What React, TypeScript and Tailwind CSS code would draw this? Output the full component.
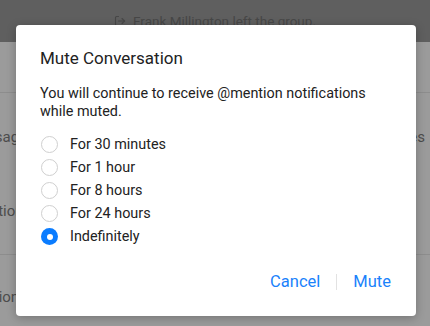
import { useState } from 'react';
import { LogOut } from 'lucide-react';

const options = ['For 30 minutes', 'For 1 hour', 'For 8 hours', 'For 24 hours', 'Indefinitely'];

const App = () => {
  const [selected, setSelected] = useState('Indefinitely');

  return (
    <div className="relative w-[430px] h-[326px] overflow-hidden bg-[#9b9b9b] font-['Roboto',sans-serif]">
      {/* page behind the overlay */}
      <div className="h-[42px] bg-[#5f5f5f] flex items-center justify-center gap-[7px] text-[13.5px] text-[#474747]">
        <LogOut size={12} strokeWidth={2.2} />
        <span>Frank Millington left the group.</span>
      </div>
      <div className="h-[51px] border-b border-[#8d8d8d]" />
      <div className="h-[162px] pt-[24px] border-b border-[#8d8d8d] text-[15px] leading-[22px] text-[#4d4d4d]">
        <div className="flex justify-between items-center h-[40px]">
          <span className="ml-[-34px]">Messages</span>
          <span className="mr-[5px]">Files</span>
        </div>
        <div className="mt-[43px] ml-[-54px]">Notifications</div>
      </div>
      <div className="pt-[31px] text-[15px] leading-[22px] text-[#4d4d4d]">
        <div className="ml-[-25px]">Options</div>
      </div>

      {/* modal */}
      <div className="absolute left-[16px] top-[25px] w-[400px] h-[291px] bg-white rounded-[4px] shadow-[0_2px_10px_rgba(0,0,0,0.25)] px-[24px] pt-[22px] text-[#222]">
        <h2 className="text-[17px] leading-[22px] font-normal">Mute Conversation</h2>
        <p className="mt-[16px] text-[14.4px] leading-[18px] w-[340px]">
          You will continue to receive @mention notifications while muted.
        </p>
        <div className="mt-[12px] flex flex-col">
          {options.map((o) => {
            const on = o === selected;
            return (
              <button
                key={o}
                onClick={() => setSelected(o)}
                className="flex items-center h-[23px] text-[14.4px] text-left"
              >
                <span
                  className={
                    on
                      ? 'ml-[1px] w-[17px] h-[17px] rounded-full bg-[#0a7cff] flex items-center justify-center'
                      : 'ml-[1px] w-[17px] h-[17px] rounded-full border border-[#cfcfcf]'
                  }
                >
                  {on && <span className="w-[6px] h-[6px] rounded-full bg-white" />}
                </span>
                <span className="ml-[12px]">{o}</span>
              </button>
            );
          })}
        </div>
        <div className="mt-[22px] pr-[1px] flex justify-end items-center text-[16.5px] text-[#1a82fb]">
          <button>Cancel</button>
          <span className="mx-[16px] w-px h-[16px] bg-[#e2e2e2]" />
          <button>Mute</button>
        </div>
      </div>
    </div>
  );
};

export default App;
